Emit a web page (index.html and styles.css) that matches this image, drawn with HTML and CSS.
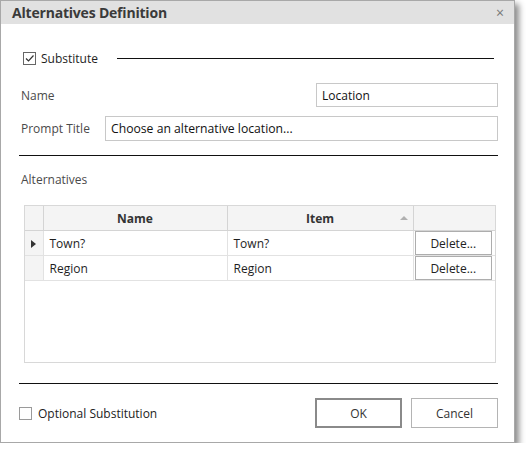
FILE: index.html
```html
<!DOCTYPE html>
<html lang="en">
<head>
  <meta charset="UTF-8">
  <title>Alternatives Definition</title>
  <link rel="stylesheet" href="styles.css">
</head>
<body>

  <div class="window">

    <!-- Title bar -->
    <div class="titlebar">
      <span class="title">Alternatives Definition</span>
      <span class="close">&#215;</span>
    </div>

    <div class="content">

      <!-- Substitute group -->
      <div class="group-row">
        <span class="check checked">
          <svg width="11" height="11" viewBox="0 0 11 11"><path d="M2 5.5 L4.5 8 L9.5 2.5" fill="none" stroke="#333" stroke-width="1.2"/></svg>
        </span>
        <span class="check-label">Substitute</span>
        <span class="rule"></span>
      </div>

      <div class="field-row name-row">
        <span class="label">Name</span>
        <div class="input name-input">Location</div>
      </div>

      <div class="field-row prompt-row">
        <span class="label">Prompt Title</span>
        <div class="input prompt-input">Choose an alternative location...</div>
      </div>

      <div class="separator top-sep"></div>

      <div class="label alt-label">Alternatives</div>

      <!-- Grid -->
      <div class="grid">
        <table>
          <colgroup>
            <col class="c-sel"><col class="c-name"><col class="c-item"><col>
          </colgroup>
          <thead>
            <tr>
              <th></th>
              <th>Name</th>
              <th class="sorted">Item<span class="sort-arrow"></span></th>
              <th></th>
            </tr>
          </thead>
          <tbody>
            <tr>
              <td class="sel"><span class="row-arrow"></span></td>
              <td>Town?</td>
              <td>Town?</td>
              <td class="btn-cell"><div class="cell-btn">Delete...</div></td>
            </tr>
            <tr>
              <td class="sel"></td>
              <td>Region</td>
              <td>Region</td>
              <td class="btn-cell"><div class="cell-btn">Delete...</div></td>
            </tr>
          </tbody>
        </table>
      </div>

      <div class="separator bottom-sep"></div>

      <!-- Footer -->
      <div class="footer">
        <span class="check"></span>
        <span class="check-label optional">Optional Substitution</span>
        <div class="buttons">
          <div class="button default">OK</div>
          <div class="button">Cancel</div>
        </div>
      </div>

    </div>
  </div>

</body>
</html>
```

FILE: styles.css
```css
body {
  margin: 0;
  background-color: #fff;
  font-family: "Open Sans", "Noto Sans", sans-serif;
  font-size: 12px;
  color: #1e1e1e;
}
.window {
  width: 513px;
  height: 441px;
  border: 1px solid #a8a8a8;
  background-color: #fff;
  box-shadow: 4px 4px 6px rgba(0, 0, 0, 0.45);
}
.titlebar {
  height: 23px;
  background-color: #e1e1e1;
  display: flex;
  align-items: center;
  justify-content: space-between;
  padding: 0 10px 0 11px;
}
.title {
  font-weight: bold;
  font-size: 14px;
  color: #3a3a3a;
  letter-spacing: -0.2px;
}
.close {
  font-size: 14px;
  color: #777;
}
.content {
  padding: 0 16px 0 18px;
}
.group-row {
  display: flex;
  align-items: center;
  height: 14px;
  margin-top: 27px;
  padding-left: 4px;
}
.check {
  width: 11px;
  height: 11px;
  border: 1px solid #9a9a9a;
  background-color: #fff;
  display: inline-flex;
  flex: none;
}
.check.checked {
  border-color: #666;
}
.check-label {
  margin-left: 5px;
}
.rule {
  flex: 1;
  height: 1px;
  background-color: #111;
  margin: 0 4px 0 19px;
}
.field-row {
  display: flex;
  align-items: center;
  justify-content: space-between;
}
.name-row {
  margin-top: 18px;
  height: 24px;
}
.prompt-row {
  margin-top: 9px;
  height: 25px;
}
.label {
  color: #4a4a4a;
  padding-left: 2px;
}
.input {
  box-sizing: border-box;
  height: 100%;
  border: 1px solid #c8c8c8;
  display: flex;
  align-items: center;
  padding-left: 5px;
  color: #111;
}
.name-input {
  width: 182px;
}
.prompt-input {
  width: 393px;
  font-size: 12.2px;
}
.separator {
  height: 1px;
  background-color: #111;
}
.top-sep {
  margin-top: 14px;
}
.alt-label {
  margin-top: 15px;
}
.grid {
  box-sizing: border-box;
  margin: 17px 2px 0 5px;
  height: 158px;
  border: 1px solid #d8d8d8;
}
.grid table {
  width: 100%;
  border-collapse: collapse;
  table-layout: fixed;
}
.c-sel { width: 18px; }
.c-name { width: 184px; }
.c-item { width: 186px; }
.grid th {
  height: 24px;
  background-color: #f4f4f4;
  border: 1px solid #d4d4d4;
  border-top: none;
  font-weight: bold;
  color: #333;
  position: relative;
  padding: 0;
}
.grid th:first-child { border-left: none; }
.grid th:last-child { border-right: none; }
.sort-arrow {
  position: absolute;
  right: 5px;
  top: 10px;
  border-left: 4px solid transparent;
  border-right: 4px solid transparent;
  border-bottom: 4px solid #b0b0b0;
}
.grid td {
  height: 24px;
  border: 1px solid #e2e2e2;
  border-top: none;
  padding: 0 0 0 6px;
  white-space: nowrap;
}
.grid td:first-child { border-left: none; }
.grid td:last-child { border-right: none; }
.grid td.sel {
  background-color: #f4f4f4;
  padding: 0;
  text-align: center;
}
.row-arrow {
  display: inline-block;
  border-top: 4px solid transparent;
  border-bottom: 4px solid transparent;
  border-left: 5px solid #333;
  vertical-align: middle;
}
.grid td.btn-cell {
  padding: 0 3px 0 1px;
}
.cell-btn {
  box-sizing: border-box;
  height: 24px;
  border: 1px solid #adadad;
  display: flex;
  align-items: center;
  justify-content: center;
  color: #222;
}
.bottom-sep {
  margin-top: 20px;
}
.footer {
  display: flex;
  align-items: center;
  margin-top: 14px;
  height: 30px;
}
.optional {
  margin-left: 6px;
  color: #222;
}
.buttons {
  margin-left: auto;
  display: flex;
  gap: 9px;
}
.button {
  box-sizing: border-box;
  width: 87px;
  height: 30px;
  border: 1px solid #b4b4b4;
  display: flex;
  align-items: center;
  justify-content: center;
  color: #333;
}
.button.default {
  border: 2px solid #8a8a8a;
}
```
